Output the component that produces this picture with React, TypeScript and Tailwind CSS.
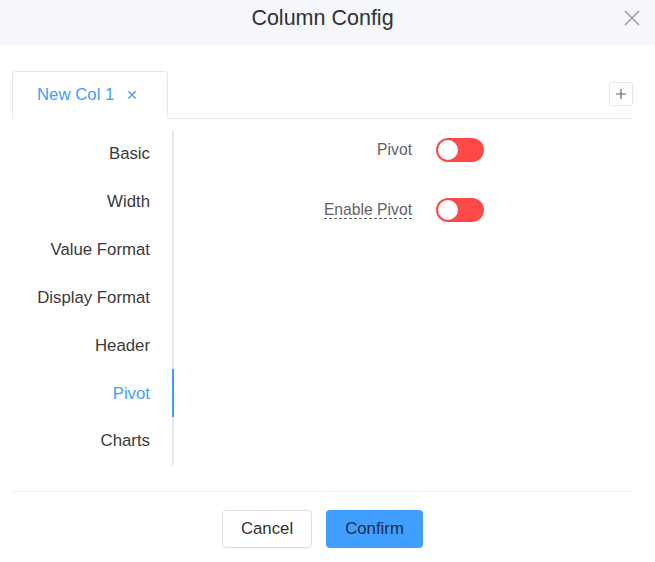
import React from "react";

const menu = ["Basic", "Width", "Value Format", "Display Format", "Header", "Pivot", "Charts"];

const Toggle = () => (
  <div className="relative h-6 w-12 rounded-full bg-[#ff4949]">
    <span className="absolute left-[2px] top-[2px] h-5 w-5 rounded-full bg-white" />
  </div>
);

export default function App() {
  const active = "Pivot";
  return (
    <div className="h-[562px] w-[655px] bg-white text-[#333] font-['Liberation_Sans',Arial,sans-serif]">
      {/* header */}
      <div className="relative flex h-[46px] items-start justify-center bg-[#f5f7fa] pl-3 pr-[22px] pt-[4px]">
        <h3 className="text-[21.5px] leading-[28px] text-[#303133]">Column Config</h3>
        <button className="absolute right-[15px] top-[10px] text-[#909399]">
          <svg width="16" height="16" viewBox="0 0 16 16" stroke="currentColor" strokeWidth="1.3">
            <path d="M1 1 L15 15 M15 1 L1 15" />
          </svg>
        </button>
      </div>

      {/* tabs */}
      <div className="ml-3 mr-[22px] mt-[25px] flex items-end border-b border-[#e4e7ed]">
        <div className="-mb-px flex h-[48px] w-[156px] items-center rounded-t-[4px] border border-b-white border-[#e4e7ed] bg-white pl-6 text-[16.8px] text-[#409eff]">
          New Col 1
          <span className="ml-[12px] text-[14px] font-light text-[#409eff]">✕</span>
        </div>
        <div className="flex-1" />
        <button className="mb-[12px] flex h-6 w-6 items-center justify-center rounded-[3px] border border-[#e4e7ed] text-[#606266]">
          <svg width="12" height="12" viewBox="0 0 12 12" stroke="currentColor" strokeWidth="1.2">
            <path d="M6 1 V11 M1 6 H11" />
          </svg>
        </button>
      </div>

      {/* body */}
      <div className="ml-3 mr-[22px] mt-[11px] flex h-[335px]">
        <div className="flex w-[162px] flex-col border-r-2 border-[#e4e7ed]">
          {menu.map((m) => (
            <div
              key={m}
              className={`relative flex h-[48px] items-center justify-end pr-[22px] text-[16.8px] ${
                m === active ? "text-[#409eff]" : "text-[#3a3a3a]"
              }`}
            >
              {m}
              {m === active && <span className="absolute -right-[2px] top-0 h-full w-[2px] bg-[#409eff]" />}
            </div>
          ))}
        </div>
        <div className="flex flex-col gap-[36px] pt-[8px]">
          <div className="flex items-center">
            <span className="w-[248px] pr-[10px] text-right text-[15.7px] text-[#606266]">Pivot</span>
            <div className="ml-[14px]"><Toggle /></div>
          </div>
          <div className="flex items-center">
            <span className="w-[248px] pr-[10px] text-right text-[15.7px] text-[#606266]">
              <span className="border-b border-dashed border-[#606266] leading-[16px]">Enable Pivot</span>
            </span>
            <div className="ml-[14px]"><Toggle /></div>
          </div>
        </div>
      </div>

      {/* footer */}
      <div className="ml-3 mr-[22px] mt-[26px] flex justify-center gap-[14px] border-t border-[#ebeef5] pt-[18px]">
        <button className="h-[38px] w-[90px] rounded-[4px] border border-[#dcdfe6] bg-white text-[16.8px] text-[#303133]">
          Cancel
        </button>
        <button className="h-[38px] w-[97px] rounded-[4px] bg-[#409eff] text-[16.8px] text-[#1f2d3d]">
          Confirm
        </button>
      </div>
    </div>
  );
}
